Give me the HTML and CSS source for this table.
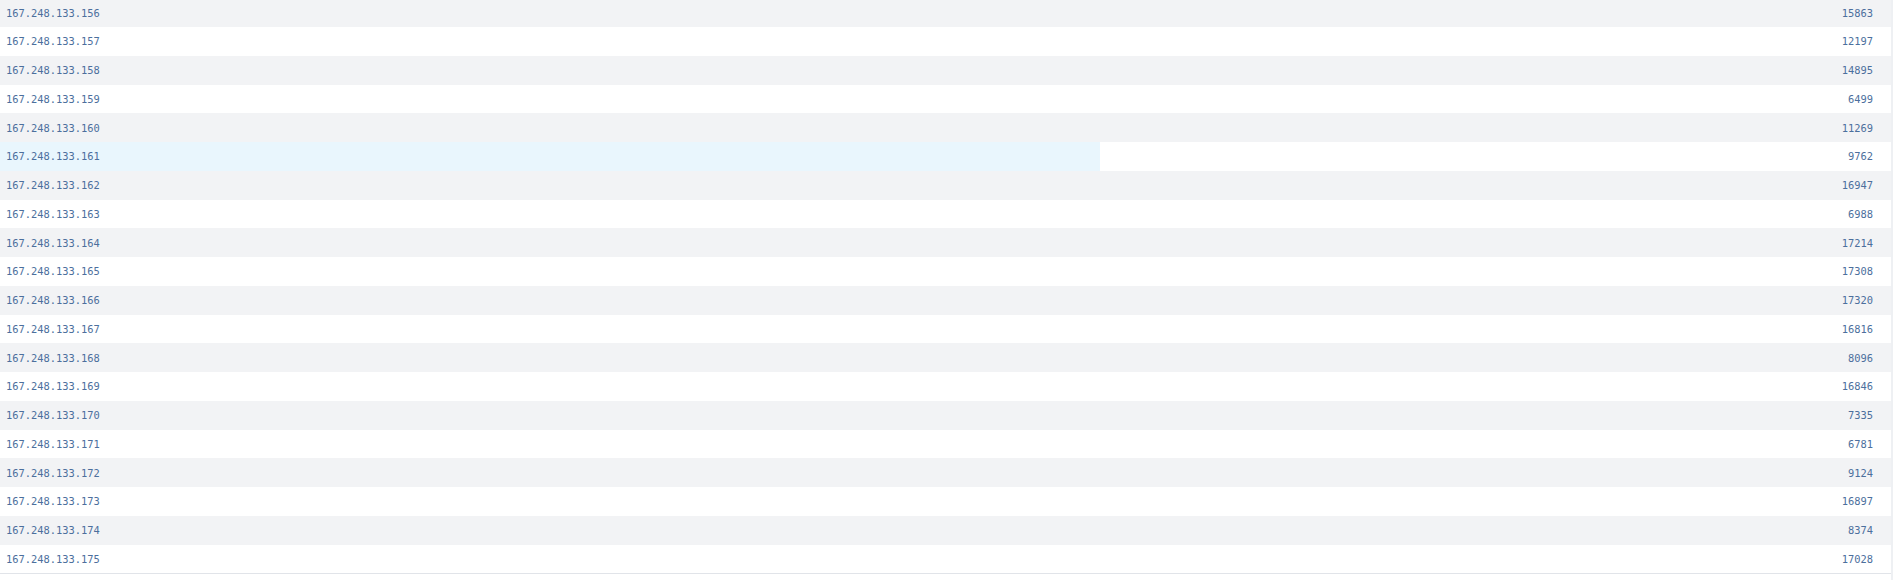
FILE: index.html
```html
<!DOCTYPE html>
<html>
<head>
<meta charset="utf-8">
<link rel="stylesheet" href="styles.css">
</head>
<body>
<div class="page">
  <div class="table">
    <div class="row"><span class="ip">167.248.133.156</span><span class="val">15863</span></div>
    <div class="row"><span class="ip">167.248.133.157</span><span class="val">12197</span></div>
    <div class="row"><span class="ip">167.248.133.158</span><span class="val">14895</span></div>
    <div class="row"><span class="ip">167.248.133.159</span><span class="val">6499</span></div>
    <div class="row"><span class="ip">167.248.133.160</span><span class="val">11269</span></div>
    <div class="row hl"><div class="bar" style="width:1100px"></div><span class="ip">167.248.133.161</span><span class="val">9762</span></div>
    <div class="row"><span class="ip">167.248.133.162</span><span class="val">16947</span></div>
    <div class="row"><span class="ip">167.248.133.163</span><span class="val">6988</span></div>
    <div class="row"><span class="ip">167.248.133.164</span><span class="val">17214</span></div>
    <div class="row"><span class="ip">167.248.133.165</span><span class="val">17308</span></div>
    <div class="row"><span class="ip">167.248.133.166</span><span class="val">17320</span></div>
    <div class="row"><span class="ip">167.248.133.167</span><span class="val">16816</span></div>
    <div class="row"><span class="ip">167.248.133.168</span><span class="val">8096</span></div>
    <div class="row"><span class="ip">167.248.133.169</span><span class="val">16846</span></div>
    <div class="row"><span class="ip">167.248.133.170</span><span class="val">7335</span></div>
    <div class="row"><span class="ip">167.248.133.171</span><span class="val">6781</span></div>
    <div class="row"><span class="ip">167.248.133.172</span><span class="val">9124</span></div>
    <div class="row"><span class="ip">167.248.133.173</span><span class="val">16897</span></div>
    <div class="row"><span class="ip">167.248.133.174</span><span class="val">8374</span></div>
    <div class="row"><span class="ip">167.248.133.175</span><span class="val">17028</span></div>
  </div>
  <div class="track"></div>
</div>
</body>
</html>
```
FILE: styles.css
```css
html, body {
  margin: 0;
  padding: 0;
  background: #ffffff;
  height: 100%;
  overflow: hidden;
}
.page {
  display: flex;
  height: 580px;
}
.table {
  width: 1891px;
  margin-top: -1.75px;
  align-self: flex-start;
  border-bottom: 1px solid #e1e4e9;
  font-family: "DejaVu Sans Mono", monospace;
  font-size: 10.4px;
  color: #4c6f9d;
}
.track {
  width: 2px;
  background: #eef0f3;
}
.row {
  position: relative;
  display: flex;
  justify-content: space-between;
  align-items: center;
  height: 28.75px;
  padding: 0 18px 0 6px;
  box-sizing: border-box;
  background: #ffffff;
}
.row:nth-child(odd) {
  background: #f2f3f5;
}
.row.hl {
  background: #ffffff;
}
.bar {
  position: absolute;
  left: 0;
  top: 0;
  bottom: 0;
  background: #e9f6fd;
}
.ip, .val {
  position: relative;
}
```
